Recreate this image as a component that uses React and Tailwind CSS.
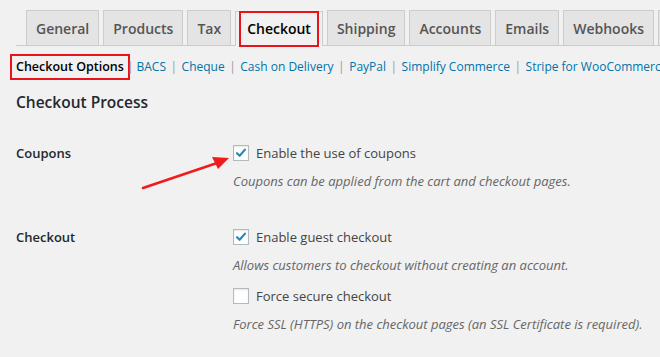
import { useState } from "react";

const tabs = ["General", "Products", "Tax", "Checkout", "Shipping", "Accounts", "Emails", "Webhooks"];
const sections = ["BACS", "Cheque", "Cash on Delivery", "PayPal", "Simplify Commerce", "Stripe for WooCommerce"];

const Check = ({ checked }) => (
  <span className="flex h-[16px] w-[16px] shrink-0 items-center justify-center border border-[#b4b9be] bg-white shadow-[inset_0_1px_2px_rgba(0,0,0,0.1)]">
    {checked && (
      <svg width="12" height="12" viewBox="0 0 12 12">
        <path d="M2 6.2 L4.6 8.8 L10 2.6" fill="none" stroke="#1e8cbe" strokeWidth="2.2" strokeLinecap="round" strokeLinejoin="round" />
      </svg>
    )}
  </span>
);

const Option = ({ checked, label, desc }) => (
  <div>
    <div className="flex items-center gap-[7px] text-[13px] text-[#444] leading-[20px]">
      <Check checked={checked} />
      <span>{label}</span>
    </div>
    <p className="mt-[8px] text-[13px] italic text-[#666] leading-[20px]">{desc}</p>
  </div>
);

export default function App() {
  const [active] = useState("Checkout");

  return (
    <div className="relative h-[357px] w-[660px] overflow-hidden bg-[#f1f1f1] font-['Open_Sans',sans-serif]">
      <div className="ml-[16px] flex h-[46px] items-end gap-[4px] border-b border-[#ccc] pl-[10px] whitespace-nowrap">
        {tabs.map((t) =>
          t === active ? (
            <div key={t} className="-mb-px flex h-[35px] items-center border border-b-0 border-[#ccc] bg-[#f1f1f1] px-[3px]">
              <span className="border-2 border-[#e8141a] px-[6px] py-[3px] text-[14px] font-semibold text-[#000] leading-[26px]">{t}</span>
            </div>
          ) : (
            <div key={t} className="flex h-[35px] items-center border border-b-0 border-[#ccc] bg-[#e4e4e4] px-[9px] text-[14px] font-semibold text-[#555]">
              {t}
            </div>
          )
        )}
        <div className="h-[35px] w-[20px] shrink-0 border border-b-0 border-[#ccc] bg-[#e4e4e4]" />
      </div>

      <div className="ml-[10px] mt-[8px] flex items-center whitespace-nowrap text-[12px] leading-[20px]">
        <span className="border-2 border-[#e8141a] px-[4px] py-[1px] text-[12.5px] font-semibold text-[#000]">Checkout Options</span>
        {sections.map((s, i) => (
          <span key={s} className="flex items-center">
            <span className={`${i === 0 ? "-ml-[3px] pr-[3px]" : "px-[4.5px]"} text-[#999]`}>|</span>
            <span className="text-[#0073aa]">{s}</span>
          </span>
        ))}
      </div>

      <div className="px-[16px]">
        <h2 className="mt-[11px] text-[15.5px] font-semibold text-[#23282d] leading-[22px]">Checkout Process</h2>

        <div className="mt-[30px] grid grid-cols-[217px_1fr]">
          <div className="text-[13px] font-semibold text-[#23282d] leading-[20px]">Coupons</div>
          <Option checked label="Enable the use of coupons" desc="Coupons can be applied from the cart and checkout pages." />
        </div>

        <div className="mt-[36px] grid grid-cols-[217px_1fr]">
          <div className="text-[13px] font-semibold text-[#23282d] leading-[20px]">Checkout</div>
          <div className="flex flex-col gap-[11px]">
            <Option checked label="Enable guest checkout" desc="Allows customers to checkout without creating an account." />
            <Option label="Force secure checkout" desc="Force SSL (HTTPS) on the checkout pages (an SSL Certificate is required)." />
          </div>
        </div>
      </div>

      <svg className="absolute left-[140px] top-[149px]" width="95" height="45" viewBox="0 0 95 45">
        <line x1="3" y1="39" x2="80" y2="13" stroke="#ee1c1c" strokeWidth="2.5" strokeLinecap="round" />
        <path d="M89 9 L72 8 L78 20 Z" fill="#ee1c1c" />
      </svg>
    </div>
  );
}
